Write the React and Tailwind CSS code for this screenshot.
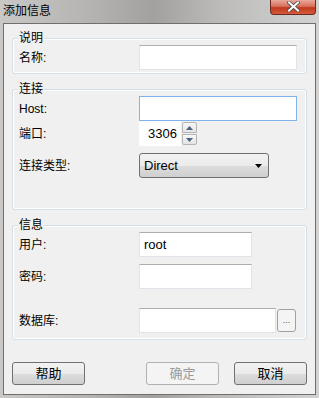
import React from 'react';

const font = { fontFamily: '"Liberation Sans", "Noto Sans CJK SC", sans-serif' };

const Group = ({ title, className, children }) => (
  <div className={`relative mx-[8px] rounded-[3px] border border-[#d5dfe5] shadow-[inset_0_0_0_1px_#ffffff] ${className}`}>
    <span className="absolute left-[5px] top-[-8px] bg-[#f0f0f0] px-[1px] text-[12px] leading-[14px] text-black">{title}</span>
    {children}
  </div>
);

const Row = ({ label, className, children }) => (
  <div className={`flex items-center ${className}`}>
    <span className="w-[126px] shrink-0 pl-[6px] text-[12px] text-black">{label}</span>
    {children}
  </div>
);

const TextBox = ({ w, value, focused }) => (
  <div
    className={`flex h-[25px] items-center bg-white px-[4px] text-[13px] text-black border ${
      focused ? 'border-[#7eb4ea]' : 'border-[#e2e3ea] border-t-[#abadb3]'
    } ${w}`}
  >
    {value}
  </div>
);

const Btn = ({ children, disabled }) => (
  <div
    className={`flex h-[23px] w-[73px] items-center justify-center rounded-[3px] border text-[13px] ${
      disabled
        ? 'border-[#adb2b5] bg-[#f4f4f4] text-[#9a9a9a]'
        : 'border-[#707070] bg-[linear-gradient(#f2f2f2_0%,#ebebeb_50%,#dddddd_51%,#cfcfcf_100%)] text-black'
    }`}
  >
    {children}
  </div>
);

export default function App() {
  return (
    <div style={font} className="flex h-[398px] w-[319px] flex-col bg-[linear-gradient(90deg,#c9c8c7_0%,#b4b2b1_30%,#a3a1a0_48%,#bdbcbb_70%,#d2d2d2_100%)]">
      {/* title bar */}
      <div className="flex h-[23px] shrink-0 items-start justify-between">
        <span className="pl-[3px] pt-[3px] text-[12px] leading-[16px] text-black">添加信息</span>
        <div className="mr-[3px] flex h-[15px] w-[46px] items-start justify-center rounded-b-[4px] border border-t-0 border-[#6d2a22] bg-[linear-gradient(#e9a99a_0%,#d8705d_45%,#c0391f_55%,#d65a3c_100%)]">
          <svg width="13" height="11" viewBox="0 0 13 11" className="mt-[1px]">
            <path d="M2 1.5 L11 9.5 M11 1.5 L2 9.5" stroke="#4a4a4a" strokeWidth="3.6" strokeLinecap="square" />
            <path d="M2 1.5 L11 9.5 M11 1.5 L2 9.5" stroke="#ffffff" strokeWidth="2" strokeLinecap="square" />
          </svg>
        </div>
      </div>

      {/* client area */}
      <div className="mx-[3px] mb-[3px] flex flex-1 flex-col border border-[#6f6f6f] bg-[#f0f0f0]">
        <Group title="说明" className="mt-[14px] h-[36px] pt-[6px]">
          <Row label="名称:">
            <TextBox w="w-[158px]" />
          </Row>
        </Group>

        <Group title="连接" className="mt-[15px] h-[121px] pt-[6px]">
          <Row label="Host:">
            <TextBox w="w-[158px]" focused />
          </Row>
          <Row label="端口:">
            <div className="flex h-[25px] w-[42px] items-center justify-end bg-white pr-[4px] text-[13px] text-black">3306</div>
            <div className="ml-[1px] flex h-[23px] w-[15px] flex-col">
              <div className="flex h-[11px] items-center justify-center rounded-t-[2px] border border-[#b5b5b5] bg-[linear-gradient(#f7f7f7,#e4e4e4)]">
                <svg width="7" height="4" viewBox="0 0 7 4"><path d="M0 4 L3.5 0 L7 4 Z" fill="#4d6185" /></svg>
              </div>
              <div className="mt-[1px] flex h-[11px] items-center justify-center rounded-b-[2px] border border-[#b5b5b5] bg-[linear-gradient(#f7f7f7,#e4e4e4)]">
                <svg width="7" height="4" viewBox="0 0 7 4"><path d="M0 0 L7 0 L3.5 4 Z" fill="#4d6185" /></svg>
              </div>
            </div>
          </Row>
          <Row label="连接类型:" className="mt-[7px]">
            <div className="flex h-[25px] w-[130px] items-center justify-between rounded-[3px] border border-[#707070] bg-[linear-gradient(#f2f2f2_0%,#ebebeb_50%,#dddddd_51%,#cfcfcf_100%)] pl-[4px] pr-[6px] text-[13px] text-black">
              <span>Direct</span>
              <svg width="7" height="4" viewBox="0 0 7 4"><path d="M0 0 L7 0 L3.5 4 Z" fill="#000" /></svg>
            </div>
          </Row>
        </Group>

        <Group title="信息" className="mt-[15px] h-[115px] pt-[6px]">
          <Row label="用户:">
            <TextBox w="w-[113px]" value="root" />
          </Row>
          <Row label="密码:" className="mt-[7px]">
            <TextBox w="w-[113px]" />
          </Row>
          <Row label="数据库:" className="mt-[19px]">
            <TextBox w="w-[137px]" />
            <div className="ml-[1px] flex h-[23px] w-[19px] items-center justify-center rounded-[3px] border border-[#a0a0a0] bg-[#f4f4f4] text-[9px] leading-none text-[#555]">
              ...
            </div>
          </Row>
        </Group>

        <div className="mt-[22px] flex px-[8px]">
          <Btn>帮助</Btn>
          <div className="ml-[61px]">
            <Btn disabled>确定</Btn>
          </div>
          <div className="ml-[15px]">
            <Btn>取消</Btn>
          </div>
        </div>
      </div>
    </div>
  );
}
